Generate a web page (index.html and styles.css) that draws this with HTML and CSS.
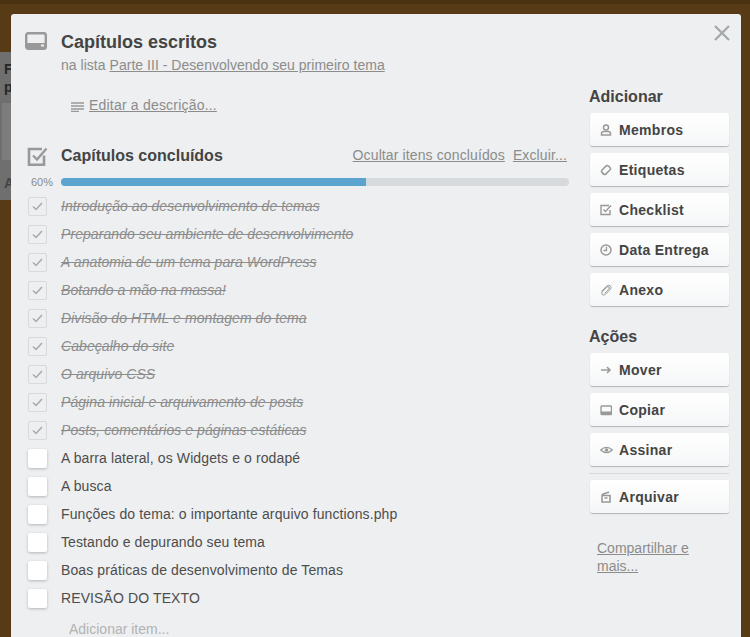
FILE: index.html
```html
<!DOCTYPE html>
<html lang="pt-BR">
<head>
  <meta charset="UTF-8" />
  <title>Capítulos escritos</title>
  <link rel="stylesheet" href="styles.css">
</head>
<body>
  <div class="fundo-card">
    <b>F<br>p</b>
    <div class="fundo-bloco"></div>
    <b class="fundo-a">A</b>
  </div>

  <div class="modal">
    <a class="fechar">
      <svg width="16" height="16" viewBox="0 0 16 16"><path d="M1 1L15 15M15 1L1 15" stroke="#a3a8ab" stroke-width="2.2" fill="none"/></svg>
    </a>

    <div class="principal">
      <div class="cabecalho">
        <svg class="icone-grande" width="22" height="18" viewBox="0 0 22 18"><rect x="1.2" y="1.2" width="19.6" height="15.6" rx="2" fill="none" stroke="#999" stroke-width="2.4"/><rect x="1" y="11" width="20" height="6" fill="#999"/><rect x="16" y="12.5" width="3" height="2" fill="#edeff0"/></svg>
        <div>
          <h1>Capítulos escritos</h1>
          <p class="na-lista">na lista <a>Parte III - Desenvolvendo seu primeiro tema</a></p>
        </div>
      </div>

      <div class="descricao">
        <svg width="13" height="10" viewBox="0 0 13 10"><path d="M0 1H13M0 4H13M0 7H13M0 9.5H8" stroke="#999" stroke-width="1.3" fill="none"/></svg>
        <a>Editar a descrição...</a>
      </div>

      <div class="checklist-topo">
        <svg class="icone-check" width="21" height="21" viewBox="0 0 21 21"><path d="M17 9.5V18.8H2V3H15" fill="none" stroke="#999" stroke-width="2.6"/><path d="M6 9.5L10 13.5L19.5 2.5" fill="none" stroke="#999" stroke-width="2.4"/></svg>
        <h2>Capítulos concluídos</h2>
        <div class="checklist-opcoes">
          <a>Ocultar itens concluídos</a>
          <a>Excluir...</a>
        </div>
      </div>

      <div class="progresso">
        <span>60%</span>
        <div class="barra"><div class="barra-cheia" style="width:60%"></div></div>
      </div>

      <ul class="itens">
        <li class="feito"><i class="caixa"><svg width="11" height="9" viewBox="0 0 11 9"><path d="M1 4.5L4 7.5L10 1" fill="none" stroke="#a8a8a8" stroke-width="1.5"/></svg></i><span>Introdução ao desenvolvimento de temas</span></li>
        <li class="feito"><i class="caixa"><svg width="11" height="9" viewBox="0 0 11 9"><path d="M1 4.5L4 7.5L10 1" fill="none" stroke="#a8a8a8" stroke-width="1.5"/></svg></i><span>Preparando seu ambiente de desenvolvimento</span></li>
        <li class="feito"><i class="caixa"><svg width="11" height="9" viewBox="0 0 11 9"><path d="M1 4.5L4 7.5L10 1" fill="none" stroke="#a8a8a8" stroke-width="1.5"/></svg></i><span>A anatomia de um tema para WordPress</span></li>
        <li class="feito"><i class="caixa"><svg width="11" height="9" viewBox="0 0 11 9"><path d="M1 4.5L4 7.5L10 1" fill="none" stroke="#a8a8a8" stroke-width="1.5"/></svg></i><span>Botando a mão na massa!</span></li>
        <li class="feito"><i class="caixa"><svg width="11" height="9" viewBox="0 0 11 9"><path d="M1 4.5L4 7.5L10 1" fill="none" stroke="#a8a8a8" stroke-width="1.5"/></svg></i><span>Divisão do HTML e montagem do tema</span></li>
        <li class="feito"><i class="caixa"><svg width="11" height="9" viewBox="0 0 11 9"><path d="M1 4.5L4 7.5L10 1" fill="none" stroke="#a8a8a8" stroke-width="1.5"/></svg></i><span>Cabeçalho do site</span></li>
        <li class="feito"><i class="caixa"><svg width="11" height="9" viewBox="0 0 11 9"><path d="M1 4.5L4 7.5L10 1" fill="none" stroke="#a8a8a8" stroke-width="1.5"/></svg></i><span>O arquivo CSS</span></li>
        <li class="feito"><i class="caixa"><svg width="11" height="9" viewBox="0 0 11 9"><path d="M1 4.5L4 7.5L10 1" fill="none" stroke="#a8a8a8" stroke-width="1.5"/></svg></i><span>Página inicial e arquivamento de posts</span></li>
        <li class="feito"><i class="caixa"><svg width="11" height="9" viewBox="0 0 11 9"><path d="M1 4.5L4 7.5L10 1" fill="none" stroke="#a8a8a8" stroke-width="1.5"/></svg></i><span>Posts, comentários e páginas estáticas</span></li>
        <li><i class="caixa"></i><span>A barra lateral, os Widgets e o rodapé</span></li>
        <li><i class="caixa"></i><span>A busca</span></li>
        <li><i class="caixa"></i><span>Funções do tema: o importante arquivo functions.php</span></li>
        <li><i class="caixa"></i><span>Testando e depurando seu tema</span></li>
        <li><i class="caixa"></i><span>Boas práticas de desenvolvimento de Temas</span></li>
        <li><i class="caixa"></i><span>REVISÃO DO TEXTO</span></li>
      </ul>
      <div class="adicionar-item">Adicionar item...</div>
    </div>

    <div class="lateral">
      <h3>Adicionar</h3>
      <a class="botao"><svg width="12" height="12" viewBox="0 0 12 12"><circle cx="6" cy="3.5" r="2.5" fill="none" stroke="#999" stroke-width="1.5"/><path d="M1.5 11V9.5Q1.5 7.5 4 7.5H8Q10.5 7.5 10.5 9.5V11Z" fill="none" stroke="#999" stroke-width="1.5"/></svg>Membros</a>
      <a class="botao"><svg width="12" height="12" viewBox="0 0 12 12"><rect x="1.5" y="3.2" width="9" height="5.6" rx="1.8" transform="rotate(-45 6 6)" fill="none" stroke="#999" stroke-width="1.5"/><path d="M1.5 7.5L4.5 10.5L2.5 10.5Z" fill="#999"/></svg>Etiquetas</a>
      <a class="botao"><svg width="12" height="12" viewBox="0 0 12 12"><path d="M10 6V10.5H1V1.5H9" fill="none" stroke="#999" stroke-width="1.4"/><path d="M3.5 5.5L5.5 7.5L11 1.5" fill="none" stroke="#999" stroke-width="1.4"/></svg>Checklist</a>
      <a class="botao"><svg width="12" height="12" viewBox="0 0 12 12"><circle cx="6" cy="6" r="5" fill="none" stroke="#999" stroke-width="1.5"/><path d="M6.5 2.8V6.5H3.5" fill="none" stroke="#999" stroke-width="1.3"/></svg>Data Entrega</a>
      <a class="botao"><svg width="12" height="12" viewBox="0 0 12 12"><path d="M1.5 7.5L6.5 2.2Q8.5 .4 10.4 1.8Q12 3.6 10.2 5.5L5.5 10.3Q3.6 11.8 2.2 10.5Q1 9 2.6 7.3L6.8 3.2Q8 2.2 9 3Q9.8 4 8.8 5L4.6 9.3" fill="none" stroke="#999" stroke-width="1"/></svg>Anexo</a>

      <h3 class="titulo-acoes">Ações</h3>
      <a class="botao"><svg width="12" height="12" viewBox="0 0 12 12"><path d="M1 6H10M7 3L10 6L7 9" fill="none" stroke="#999" stroke-width="1.5"/></svg>Mover</a>
      <a class="botao"><svg width="12" height="12" viewBox="0 0 12 12"><rect x="1" y="2" width="10.5" height="8.5" rx="1" fill="none" stroke="#999" stroke-width="1.4"/><rect x="1" y="7.5" width="10.5" height="3" fill="#999"/></svg>Copiar</a>
      <a class="botao"><svg class="icone-olho" width="13" height="12" viewBox="0 0 13 12"><path d="M.7 6Q6.5 .8 12.3 6Q6.5 11.2 .7 6Z" fill="none" stroke="#999" stroke-width="1.3"/><circle cx="6.5" cy="6" r="1.8" fill="#999"/></svg>Assinar</a>
      <hr class="divisor">
      <a class="botao"><svg width="12" height="12" viewBox="0 0 12 12"><path d="M2 4.5H10V11H2ZM2 3.5L9 1M4.5 7H7.5" fill="none" stroke="#999" stroke-width="1.6"/></svg>Arquivar</a>

      <a class="compartilhar">Compartilhar e mais...</a>
    </div>
  </div>
</body>
</html>
```

FILE: styles.css
```css
html, body {
  height: 100%;
}
body {
  margin: 0;
  height: 637px;
  overflow: hidden;
  background: linear-gradient(#4a3112 0, #4a3112 4px, #573b16 4px, #573b16 100%);
  font-family: "Liberation Sans", Arial, sans-serif;
  font-size: 14px;
  color: #4d4d4d;
  position: relative;
}
a {
  color: #8c8c8c;
  text-decoration: underline;
}

/* cartao que aparece atras do modal */
.fundo-card {
  position: absolute;
  left: 0;
  top: 52px;
  width: 11px;
  height: 148px;
  background: #6f6f6f;
  overflow: hidden;
  font-size: 14px;
  line-height: 18px;
  color: #262626;
}
.fundo-card b {
  display: block;
  padding: 8px 0 0 4px;
}
.fundo-card .fundo-bloco {
  height: 57px;
  margin-top: 7px;
  margin-left: 2px;
  background: #7d7d7d;
}
.fundo-card .fundo-a {
  padding: 14px 0 0 4px;
  color: #444;
}

.modal {
  position: absolute;
  left: 11px;
  top: 14px;
  width: 730px;
  height: 640px;
  box-sizing: border-box;
  padding: 16px 12px 0 14px;
  background: #edeff0;
  border-radius: 3px 3px 0 0;
  display: flex;
}
.fechar {
  position: absolute;
  top: 11px;
  right: 11px;
  display: flex;
}

.principal {
  width: 544px;
  margin-right: 20px;
}
.cabecalho {
  display: flex;
  align-items: flex-start;
  gap: 14px;
}
.icone-grande {
  margin-top: 2px;
  flex-shrink: 0;
}
h1 {
  margin: 0;
  font-size: 18px;
  line-height: 24px;
  color: #444;
}
.na-lista {
  margin: 1px 0 0;
  line-height: 20px;
  color: #8c8c8c;
  letter-spacing: 0.03px;
}

.descricao {
  display: flex;
  align-items: center;
  gap: 5px;
  margin: 20px 0 0 46px;
  line-height: 20px;
  letter-spacing: 0.2px;
}
.descricao svg {
  margin-top: 3px;
}

.checklist-topo {
  display: flex;
  align-items: center;
  margin: 30px 0 0 2px;
  height: 22px;
}
.icone-check {
  flex-shrink: 0;
  margin-right: 13px;
}
h2 {
  margin: 0;
  font-size: 16px;
  color: #444;
  flex: 1;
}
.checklist-opcoes {
  display: flex;
  gap: 8px;
  padding: 0 2px 2px 0;
  letter-spacing: 0.12px;
}

.progresso {
  display: flex;
  align-items: center;
  margin-top: 7px;
  height: 16px;
}
.progresso span {
  width: 36px;
  padding-left: 6px;
  box-sizing: border-box;
  font-size: 11px;
  color: #8c8c8c;
}
.barra {
  flex: 1;
  height: 8px;
  border-radius: 4px;
  background: #d6dadc;
  overflow: hidden;
}
.barra-cheia {
  height: 100%;
  background: #5ba4cf;
}

.itens {
  list-style: none;
  margin: 2px 0 0;
  padding: 0;
}
.itens li {
  display: flex;
  align-items: center;
  height: 28px;
  color: #4d4d4d;
  letter-spacing: 0.11px;
}
.caixa {
  width: 19px;
  height: 19px;
  box-sizing: border-box;
  margin: 0 14px 0 3px;
  border-radius: 2px;
  background: #fff;
  box-shadow: 0 1px 3px rgba(0,0,0,0.25);
  display: flex;
  align-items: center;
  justify-content: center;
  flex-shrink: 0;
}
.feito .caixa {
  background: #edeff0;
  border: 1px solid #d6dadc;
  box-shadow: none;
}
.itens .feito span {
  color: #8c8c8c;
  font-style: italic;
  text-decoration: line-through;
  letter-spacing: 0.07px;
}
.adicionar-item {
  margin: 7px 0 0 44px;
  line-height: 20px;
  color: #b3b3b3;
}

.lateral {
  width: 140px;
  display: flex;
  flex-direction: column;
  margin-top: 57px;
}
h3 {
  margin: 0 0 6px;
  font-size: 16px;
  line-height: 20px;
  color: #444;
}
.lateral .titulo-acoes {
  margin: 14px 0 6px;
}
.botao {
  display: flex;
  align-items: center;
  gap: 7px;
  height: 33px;
  margin: 0 0 7px 1px;
  padding-left: 10px;
  box-sizing: border-box;
  border-radius: 3px;
  background: linear-gradient(#fff, #f5f6f7);
  box-shadow: 0 1px 1px rgba(0,0,0,0.25);
  font-weight: bold;
  letter-spacing: 0.3px;
  color: #444;
  text-decoration: none;
}
.icone-olho {
  margin-right: -1px;
}
.divisor {
  width: 100%;
  height: 1px;
  margin: 0 0 6px;
  border: 0;
  background: #d6dadc;
}
.compartilhar {
  margin: 19px 20px 0 8px;
  line-height: 18px;
}
```
